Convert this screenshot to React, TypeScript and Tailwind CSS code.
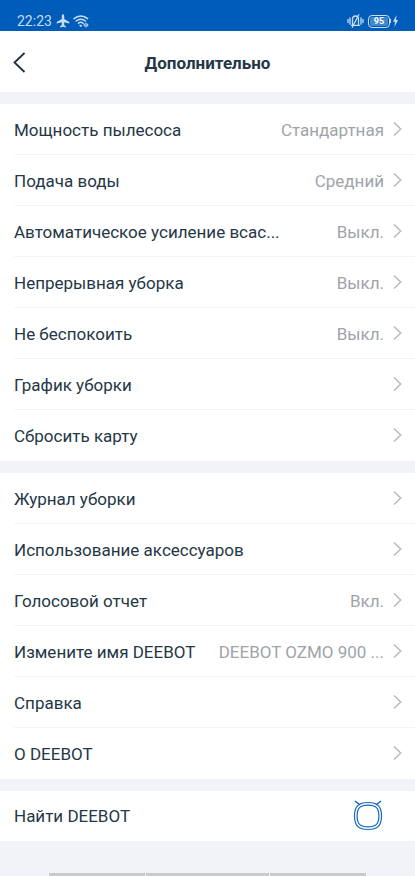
type Item = {
  label: string;
  value?: string;
};

const CLEANING: Item[] = [
  { label: "Мощность пылесоса", value: "Стандартная" },
  { label: "Подача воды", value: "Средний" },
  { label: "Автоматическое усиление всас...", value: "Выкл." },
  { label: "Непрерывная уборка", value: "Выкл." },
  { label: "Не беспокоить", value: "Выкл." },
  { label: "График уборки" },
  { label: "Сбросить карту" },
];

const DEVICE: Item[] = [
  { label: "Журнал уборки" },
  { label: "Использование аксессуаров" },
  { label: "Голосовой отчет", value: "Вкл." },
  { label: "Измените имя DEEBOT", value: "DEEBOT OZMO 900 ..." },
  { label: "Справка" },
  { label: "О DEEBOT" },
];

const StatusBar = () => (
  <div className="flex h-[31px] items-end justify-between bg-[#005cb9] pr-[17px] pl-[17px] text-[#c5dcf4]">
    <div className="flex h-5 items-center">
      <span className="text-sm leading-5">22:23</span>
      <svg viewBox="0 0 14 14" className="ml-1 h-3.5 w-3.5" fill="currentColor">
        <path d="M7 .3c.9 0 1.200.8 1.200 1.600v3l5.100 3.200v1.500L8.200 8.200v2.800l1.600 1.300v1.200L7 12.800l-2.800.7v-1.200L5.800 11V8.200L.7 9.600V8.100L5.800 4.900v-3C5.800 1.100 6.100.3 7 .3z" />
      </svg>
      <svg viewBox="0 0 17 14" className="ml-[3px] h-3.5 w-[17px]" fill="none" stroke="currentColor" strokeWidth="1.500" strokeLinecap="round">
        <path d="M1 4.600C5 1 10.700 1 14.600 4.600M3.200 7C5.800 4.600 9.800 4.600 12.400 7M5.400 9.300c1.400-1.300 3.400-1.300 4.800 0" />
        <path d="M7 11.300h1.800l-.9 1.200z" fill="currentColor" strokeWidth="1" />
        <path d="M12.500 9l-2 2.100 2 2.100zM13.500 9l2 2.100-2 2.100z" fill="currentColor" strokeWidth=".3" />
      </svg>
    </div>
    <StatusRight />
  </div>
);

const StatusRight = () => (
  <div className="flex h-5 items-center">
    <svg viewBox="0 0 17 14" className="h-3.5 w-[17px]" fill="none" stroke="currentColor" strokeWidth="1.300" strokeLinecap="round">
      <path d="M1 5.500v3M3 3.800v6.400M14 3.800v6.400M16 5.500v3" />
      <path d="M4.500 11.300h8M5.500 11V5.300C5.500 3.300 6.800 2 8.500 2s3 1.300 3 3.300V11M5.300 13.300L11.800.8" />
    </svg>
    <div className="ml-1 flex h-[13px] w-[22px] rounded-[4px] border border-[#c5dcf4] p-px">
      <span className="flex flex-1 items-center justify-center rounded-xs bg-[#4388cc] text-[9px] leading-none font-bold text-white">
        95
      </span>
    </div>
    <div className="h-1 w-px bg-[#c5dcf4]" />
    <svg viewBox="0 0 5 12" className="ml-0.5 h-3 w-[5px]" fill="currentColor">
      <path d="M3.500 0L0 6.800h2L1.500 12 5 5H3z" />
    </svg>
  </div>
);

const Chevron = () => (
  <svg viewBox="0 0 9 16" className="h-4 w-[9px] shrink-0" fill="none" stroke="#b4b8bc" strokeWidth="1.400">
    <path d="M1 1.500L7.700 8 1 14.500" />
  </svg>
);

const Section = ({ items }: { items: Item[] }) => (
  <ul className="mt-3 bg-white pl-3.5">
    {items.map(({ label, value }) => (
      <li key={label} className="border-b border-[#f3f4f5] last:border-transparent">
        <button className="flex h-[50px] w-full items-center pr-[13px] text-left text-[17px] leading-6">
          <span className="pt-0.5 whitespace-nowrap">{label}</span>
          <span className="ml-auto pt-0.5 pr-[9px] whitespace-nowrap text-[#a0a4a8]">{value}</span>
          <Chevron />
        </button>
      </li>
    ))}
  </ul>
);

const RobotIcon = () => (
  <svg viewBox="0 0 30 32" className="h-8 w-[30px]" fill="none" stroke="#1469bd" strokeWidth="1.200">
    <path d="M15 2.500C24.500 2.500 28.500 6.300 28.500 16S24.500 29.500 15 29.500 1.500 25.700 1.500 16 5.500 2.500 15 2.500z" />
    <path d="M15 5.100c8 0 10.900 2.900 10.900 10.900S23 26.900 15 26.900 4.100 24 4.100 16 7 5.100 15 5.100z" />
    <path d="M2 1l5 4M28 1l-5 4" strokeWidth="1.600" />
  </svg>
);

const App = () => (
  <div className="flex min-h-screen flex-col bg-[#f2f3f8] font-['Roboto','Noto_Sans',sans-serif] text-[#253746]">
    <StatusBar />

    <header className="grid h-[61px] grid-cols-[1fr_auto_1fr] items-center bg-white px-3 pt-0.5">
      <button aria-label="Назад" className="justify-self-start">
        <svg viewBox="0 0 14 22" className="h-[22px] w-3.5" fill="none" stroke="#1d2f3e" strokeWidth="1.800">
          <path d="M12.500 1L2.500 10.500l10 9.500" />
        </svg>
      </button>
      <h1 className="text-[17px] leading-6 font-bold">Дополнительно</h1>
    </header>

    <main>
      <Section items={CLEANING} />
      <Section items={DEVICE} />
      <button className="mt-3 flex h-[50px] w-full items-center justify-between bg-white pr-8 pl-3.5 text-[17px] leading-6">
        <span>Найти DEEBOT</span>
        <RobotIcon />
      </button>
    </main>

    {/* system navigation hints */}
    <div className="mt-auto grid grid-cols-[96px_123px_96px] justify-center gap-px">
      <div className="h-[3px] bg-[#c8c9cb]" />
      <div className="h-[3px] bg-[#c8c9cb]" />
      <div className="h-[3px] bg-[#c8c9cb]" />
    </div>
  </div>
);

export default App;
